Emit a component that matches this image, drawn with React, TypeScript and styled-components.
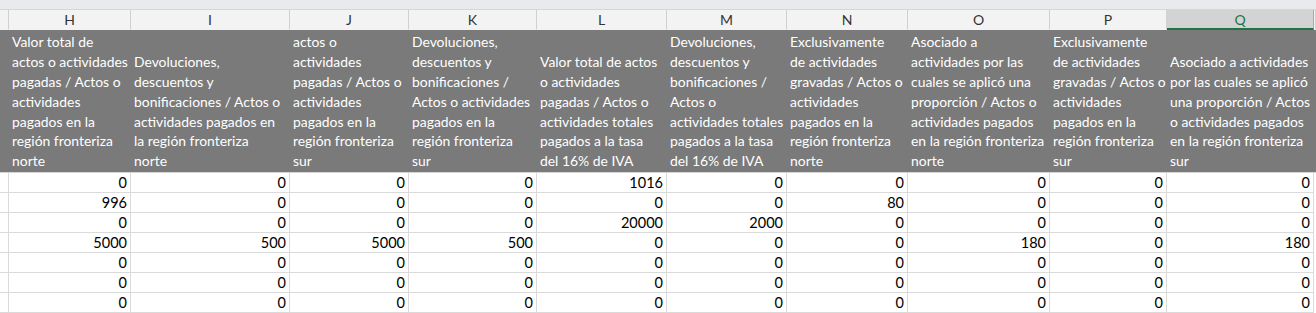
import styled, { createGlobalStyle } from 'styled-components'

const GlobalStyle = createGlobalStyle`
	body{
		margin: 0;
		background: #ffffff;
		font-family: "Lato", "Liberation Sans", sans-serif;
	}
`

const COLS = '9px 122px 159px 119px 128px 130px 120px 121px 142px 117px 147px 1fr'

const Sheet = styled.div`
	width: 1316px;
	height: 313px;
	overflow: hidden;
	background: #ffffff;
`
const TopStrip = styled.div`
	height: 9px;
	background: #e8eaed;
	border-bottom: 1px solid #d4d6d9;
`
const Row = styled.div`
	display: grid;
	grid-template-columns: ${COLS};
`
const Letter = styled.div<{ $active?: boolean }>`
	box-sizing: border-box;
	height: 20px;
	display: flex;
	align-items: center;
	justify-content: center;
	font-size: 14px;
	color: ${p => (p.$active ? '#217346' : '#333333')};
	background: ${p => (p.$active ? '#d3d3d3' : '#f3f3f3')};
	border-right: 1px solid ${p => (p.$active ? '#a9a9a9' : '#d0d0d0')};
	border-bottom: ${p => (p.$active ? '2px solid #217346' : '1px solid #f3f3f3')};
`
const HeadCell = styled.div`
	box-sizing: border-box;
	height: 143px;
	padding: 0 0 1px 3px;
	background: #7a7a7a;
	color: #ffffff;
	font-size: 13.9px;
	line-height: 19.8px;
	display: flex;
	flex-direction: column;
	justify-content: flex-end;
	overflow: hidden;
	white-space: nowrap;
	border-bottom: 1px solid #d4d4d4;
`
const Cell = styled.div`
	box-sizing: border-box;
	height: 20px;
	padding-right: 3px;
	font-size: 14.5px;
	line-height: 20px;
	color: #000000;
	text-align: right;
	border-right: 1px solid #dadada;
	border-bottom: 1px solid #dadada;
`
const Edge = styled(Cell)`
	border-right: none;
	border-bottom: none;
`

const letters = ['', 'H', 'I', 'J', 'K', 'L', 'M', 'N', 'O', 'P', 'Q']

const headers: string[][] = [
	['Valor total de', 'actos o actividades', 'pagadas / Actos o', 'actividades', 'pagados en la', 'región fronteriza', 'norte'],
	['Devoluciones,', 'descuentos y', 'bonificaciones / Actos o', 'actividades pagados en', 'la región fronteriza', 'norte'],
	['actos o', 'actividades', 'pagadas / Actos o', 'actividades', 'pagados en la', 'región fronteriza', 'sur'],
	['Devoluciones,', 'descuentos y', 'bonificaciones /', 'Actos o actividades', 'pagados en la', 'región fronteriza', 'sur'],
	['Valor total de actos', 'o actividades', 'pagadas / Actos o', 'actividades totales', 'pagados a la tasa', 'del 16% de IVA'],
	['Devoluciones,', 'descuentos y', 'bonificaciones /', 'Actos o', 'actividades totales', 'pagados a la tasa', 'del 16% de IVA'],
	['Exclusivamente', 'de actividades', 'gravadas / Actos o', 'actividades', 'pagados en la', 'región fronteriza', 'norte'],
	['Asociado a', 'actividades por las', 'cuales se aplicó una', 'proporción / Actos o', 'actividades pagados', 'en la región fronteriza', 'norte'],
	['Exclusivamente', 'de actividades', 'gravadas / Actos o', 'actividades', 'pagados en la', 'región fronteriza', 'sur'],
	['Asociado a actividades', 'por las cuales se aplicó', 'una proporción / Actos', 'o actividades pagados', 'en la región fronteriza', 'sur'],
]

const rows: number[][] = [
	[0, 0, 0, 0, 1016, 0, 0, 0, 0, 0],
	[996, 0, 0, 0, 0, 0, 80, 0, 0, 0],
	[0, 0, 0, 0, 20000, 2000, 0, 0, 0, 0],
	[5000, 500, 5000, 500, 0, 0, 0, 180, 0, 180],
	[0, 0, 0, 0, 0, 0, 0, 0, 0, 0],
	[0, 0, 0, 0, 0, 0, 0, 0, 0, 0],
	[0, 0, 0, 0, 0, 0, 0, 0, 0, 0],
]

const App = () => {
	return (
		<>
			<GlobalStyle />
			<Sheet>
				<TopStrip />
				<Row>
					{letters.map(l => (
						<Letter key={l} $active={l === 'Q'}>{l}</Letter>
					))}
					<Letter />
				</Row>
				<Row>
					<HeadCell />
					{headers.map((lines, i) => (
						<HeadCell key={i}>
							{lines.map((t, j) => (
								<span key={j}>{t}</span>
							))}
						</HeadCell>
					))}
					<HeadCell />
				</Row>
				{rows.map((r, i) => (
					<Row key={i}>
						<Cell />
						{r.map((v, j) => (
							<Cell key={j}>{v}</Cell>
						))}
						<Edge />
					</Row>
				))}
			</Sheet>
		</>
	)
}

export default App
